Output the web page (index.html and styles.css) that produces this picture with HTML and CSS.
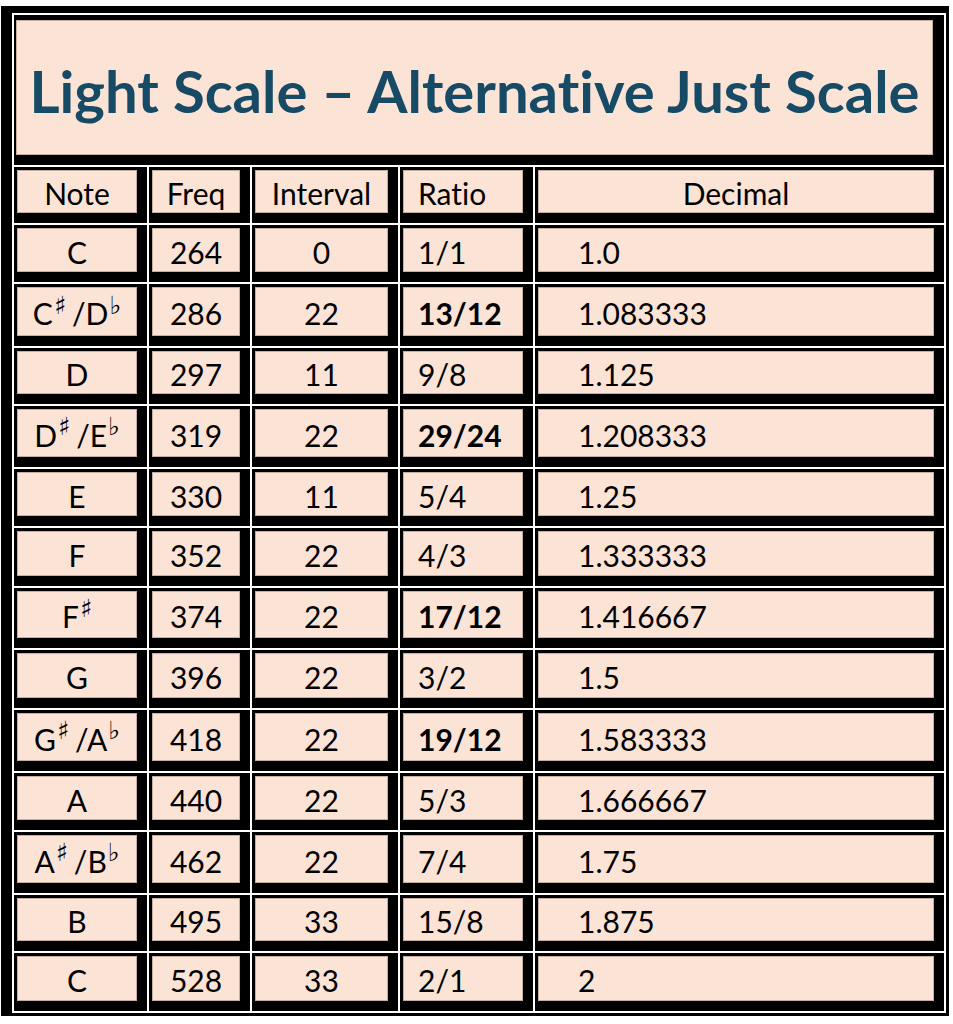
FILE: index.html
```html
<!DOCTYPE html>
<html>
<head>
<meta charset="utf-8">
<link rel="stylesheet" href="styles.css">
</head>
<body>
<div class="frame">
  <div class="grid">
    <div class="cell title"><div class="in">Light Scale – Alternative Just Scale</div></div>

    <div class="cell"><div class="in c">Note</div></div>
    <div class="cell"><div class="in c">Freq</div></div>
    <div class="cell"><div class="in c">Interval</div></div>
    <div class="cell"><div class="in l">Ratio</div></div>
    <div class="cell"><div class="in c">Decimal</div></div>

    <div class="cell"><div class="in c">C</div></div>
    <div class="cell"><div class="in c">264</div></div>
    <div class="cell"><div class="in c">0</div></div>
    <div class="cell"><div class="in l">1/1</div></div>
    <div class="cell"><div class="in d">1.0</div></div>

    <div class="cell"><div class="in c">C<span class="acc sp">♯</span>/D<span class="acc">♭</span></div></div>
    <div class="cell"><div class="in c">286</div></div>
    <div class="cell"><div class="in c">22</div></div>
    <div class="cell"><div class="in l b">13/12</div></div>
    <div class="cell"><div class="in d">1.083333</div></div>

    <div class="cell"><div class="in c">D</div></div>
    <div class="cell"><div class="in c">297</div></div>
    <div class="cell"><div class="in c">11</div></div>
    <div class="cell"><div class="in l">9/8</div></div>
    <div class="cell"><div class="in d">1.125</div></div>

    <div class="cell"><div class="in c">D<span class="acc sp">♯</span>/E<span class="acc">♭</span></div></div>
    <div class="cell"><div class="in c">319</div></div>
    <div class="cell"><div class="in c">22</div></div>
    <div class="cell"><div class="in l b">29/24</div></div>
    <div class="cell"><div class="in d">1.208333</div></div>

    <div class="cell"><div class="in c">E</div></div>
    <div class="cell"><div class="in c">330</div></div>
    <div class="cell"><div class="in c">11</div></div>
    <div class="cell"><div class="in l">5/4</div></div>
    <div class="cell"><div class="in d">1.25</div></div>

    <div class="cell"><div class="in c">F</div></div>
    <div class="cell"><div class="in c">352</div></div>
    <div class="cell"><div class="in c">22</div></div>
    <div class="cell"><div class="in l">4/3</div></div>
    <div class="cell"><div class="in d">1.333333</div></div>

    <div class="cell"><div class="in c">F<span class="acc">♯</span></div></div>
    <div class="cell"><div class="in c">374</div></div>
    <div class="cell"><div class="in c">22</div></div>
    <div class="cell"><div class="in l b">17/12</div></div>
    <div class="cell"><div class="in d">1.416667</div></div>

    <div class="cell"><div class="in c">G</div></div>
    <div class="cell"><div class="in c">396</div></div>
    <div class="cell"><div class="in c">22</div></div>
    <div class="cell"><div class="in l">3/2</div></div>
    <div class="cell"><div class="in d">1.5</div></div>

    <div class="cell"><div class="in c">G<span class="acc sp">♯</span>/A<span class="acc">♭</span></div></div>
    <div class="cell"><div class="in c">418</div></div>
    <div class="cell"><div class="in c">22</div></div>
    <div class="cell"><div class="in l b">19/12</div></div>
    <div class="cell"><div class="in d">1.583333</div></div>

    <div class="cell"><div class="in c">A</div></div>
    <div class="cell"><div class="in c">440</div></div>
    <div class="cell"><div class="in c">22</div></div>
    <div class="cell"><div class="in l">5/3</div></div>
    <div class="cell"><div class="in d">1.666667</div></div>

    <div class="cell"><div class="in c">A<span class="acc sp">♯</span>/B<span class="acc">♭</span></div></div>
    <div class="cell"><div class="in c">462</div></div>
    <div class="cell"><div class="in c">22</div></div>
    <div class="cell"><div class="in l">7/4</div></div>
    <div class="cell"><div class="in d">1.75</div></div>

    <div class="cell"><div class="in c">B</div></div>
    <div class="cell"><div class="in c">495</div></div>
    <div class="cell"><div class="in c">33</div></div>
    <div class="cell"><div class="in l">15/8</div></div>
    <div class="cell"><div class="in d">1.875</div></div>

    <div class="cell"><div class="in c">C</div></div>
    <div class="cell"><div class="in c">528</div></div>
    <div class="cell"><div class="in c">33</div></div>
    <div class="cell"><div class="in l">2/1</div></div>
    <div class="cell"><div class="in d">2</div></div>
  </div>
</div>
</body>
</html>
```

FILE: styles.css
```css
html, body {
  margin: 0;
  padding: 0;
  background: #ffffff;
}

body {
  font-family: Lato, "Open Sans", sans-serif;
  font-variant-ligatures: none;
}

.frame {
  margin: 6px 0 0 1px;
  width: fit-content;
  background: #000000;
  padding: 7px 3px 3px 11px;
}

.grid {
  display: grid;
  grid-template-columns: 133px 101px 146px 133px 409px;
  grid-template-rows: 150px 56px 57px 62px 56px 61px 57px 58px 60px 58px 61px 57px 61px 56px 58px;
  gap: 2px;
  padding: 2px;
  background: #ffffff;
}

.cell {
  background: #000000;
  padding: 3px 10px 10px 3px;
  display: flex;
}

.title {
  grid-column: 1 / -1;
  padding: 5px 11px 10px 2px;
}

.in {
  flex: 1;
  background: #fbe3d6;
  box-shadow: inset 0 0 0 1px #c7aea2;
  display: flex;
  align-items: center;
  font-size: 30px;
  color: #000000;
  padding-top: 3px;
  white-space: nowrap;
}

.title .in {
  justify-content: center;
  font-size: 58px;
  font-weight: 700;
  color: #174a64;
  padding-top: 5px;
}

.c {
  justify-content: center;
}

.l {
  padding-left: 15px;
}

.d {
  padding-left: 40px;
}

.b {
  font-weight: 700;
}

.acc {
  font-family: "DejaVu Sans", sans-serif;
  font-size: 25px;
  color: #000000;
  position: relative;
  top: -8px;
  margin-left: 1px;
}

.sp {
  margin-right: 6px;
}
```
